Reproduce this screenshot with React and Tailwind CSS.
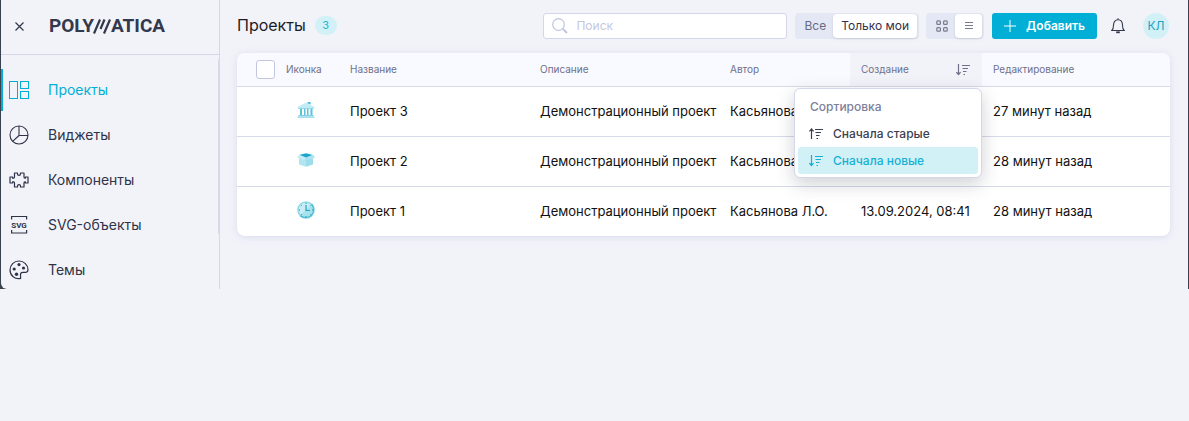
import { useState } from "react";

const NAV = [
  { id: "projects", label: "Проекты", icon: LayoutIcon },
  { id: "widgets", label: "Виджеты", icon: PieIcon },
  { id: "components", label: "Компоненты", icon: PuzzleIcon },
  { id: "svg", label: "SVG-объекты", icon: SvgIcon },
  { id: "themes", label: "Темы", icon: PaletteIcon },
];

const PROJECTS = [
  { id: 3, name: "Проект 3", icon: BankIcon, created: "13.09.2024, 08:42", edited: "27 минут назад" },
  { id: 2, name: "Проект 2", icon: BoxIcon, created: "13.09.2024, 08:41", edited: "28 минут назад" },
  { id: 1, name: "Проект 1", icon: ClockIcon, created: "13.09.2024, 08:41", edited: "28 минут назад" },
];

// Sidebar icons
function LayoutIcon() {
  return (
    <svg width="20" height="20" viewBox="0 0 20 20" fill="none" stroke="currentColor">
      <rect x=".5" y="1.5" width="8" height="17" />
      <rect x="11.5" y="1.5" width="8" height="7" />
      <rect x="11.5" y="11.5" width="8" height="7" />
    </svg>
  );
}

function PieIcon() {
  return (
    <svg width="20" height="20" viewBox="0 0 20 20" fill="none" stroke="currentColor" strokeWidth="1.1">
      <circle cx="10" cy="10" r="9" />
      <path d="M10 1v9.500h9M10 10.500 3.600 16.400" />
    </svg>
  );
}

function PuzzleIcon() {
  return (
    <svg width="20" height="20" viewBox="0 0 20 20" fill="none" stroke="currentColor" strokeWidth="1.2" strokeLinejoin="round">
      <path d="M5.500 7V3h3v1c0 .8.600 1.300 1.500 1.300S11.500 4.800 11.500 4V3h3.500v4c0 1 .5 1.200 1 1.200h.4V7h2.600v6h-2.600v-1.200H16c-.5 0-1 .3-1 1.200v4h-3.500v-1c0-.8-.6-1.300-1.500-1.300S8.500 15.200 8.500 16v1h-3v-4c0-.9-.5-1.200-1-1.200h-.9V13H1V7h2.600v1.200h.9c.5 0 1-.2 1-1.200z" />
    </svg>
  );
}

function SvgIcon() {
  return (
    <svg width="20" height="20" viewBox="0 0 20 20" fill="none" stroke="currentColor" strokeWidth="1.2">
      <path d="M2.600 4.500v-3h15v3M2.600 15v3h15v-3" />
      <text x="10" y="13" textAnchor="middle" stroke="none" fill="currentColor" fontFamily="Roboto, sans-serif" fontWeight="700" fontSize="8">
        SVG
      </text>
    </svg>
  );
}

function PaletteIcon() {
  return (
    <svg width="20" height="20" viewBox="0 0 20 20" fill="none" stroke="currentColor" strokeWidth="1.2">
      <path d="M11.600 18.500C5.800 19.600 1 15.400 1 10c0-5 4-9 9-9s9 4 9 8.600c0 1.800-.6 2.700-2 2.700h-3.200c-1.600 0-2.300 1-2.300 2.300z" />
      <g fill="currentColor" stroke="none">
        <circle cx="10" cy="4.600" r="1.600" />
        <circle cx="5.200" cy="9" r="1.600" />
        <circle cx="14.500" cy="8" r="1.600" />
        <circle cx="7.500" cy="14.200" r="1.700" />
      </g>
    </svg>
  );
}

// Project icons
function BankIcon() {
  return (
    <svg width="18" height="16" viewBox="0 0 18 16" className="mx-auto">
      <path d="M10.500 0h3v2.500l-3-1z" fill="#45bdd8" />
      <path d="M9 .5 17.500 5v1.200H.5V5z" fill="#c2ebf4" />
      <path d="M1.500 6h15v1h-15z" fill="#8bd6e7" />
      <path d="M3 7h2v6H3zM7 7h1.500v6H7zM10 7h1.500v6H10zM13.500 7h2v6h-2z" fill="#5cc2db" />
      <path d="M1.500 13h15v1.200h-15z" fill="#7fd0e3" />
      <path d="M.5 14.200h17V16H.5z" fill="#a3dfec" />
    </svg>
  );
}

function BoxIcon() {
  return (
    <svg width="18" height="14" viewBox="0 0 18 14" className="mx-auto">
      <path d="M2 5h7v8.700L2 11.500z" fill="#b0e5f1" />
      <path d="M16 5H9v8.700l7-2.200z" fill="#9ddcea" />
      <path d="M9 .3 16 2 9 5 2 2z" fill="#1ba7ca" />
      <path d="M2 1.800 9 4.500 7 7 0 4.500z" fill="#c6edf6" />
      <path d="M16 1.800 9 4.500 11 7l7-2.500z" fill="#aee3ef" />
    </svg>
  );
}

function ClockIcon() {
  return (
    <svg width="18" height="18" viewBox="0 0 18 18" className="mx-auto">
      <circle cx="9" cy="9" r="8.800" fill="#8fd9e9" />
      <path d="M2.800 15.200A8.800 8.800 0 0 0 15.200 2.800z" fill="#4fbdd6" />
      <circle cx="8.800" cy="8.800" r="7" fill="#c7eef6" />
      <path d="M3.900 13.800A7 7 0 0 0 13.800 3.900z" fill="#a6e2ee" />
      <path d="M9 4v5.500h4" fill="none" stroke="#2a9fbe" strokeWidth="1.200" />
      <path d="M9 1.800v1M9 15v1M2 9h1M15 9h1M4 4l.7.7M13.500 13.500l.6.6M4 14l.7-.7M13.500 4.500l.6-.6" stroke="#138db0" strokeWidth="1" />
    </svg>
  );
}

// Toolbar icons
function SortIcon({ up }) {
  return (
    <svg width="14" height="12" viewBox="0 0 14 12" fill="none" stroke="currentColor" strokeWidth="1.200" className="shrink-0">
      <path d={up ? "M2.500 11V1M.4 3.400 2.500 1l2.100 2.400" : "M2.500 0v10.400M.4 8.200l2.100 2.300 2.100-2.300"} />
      <path d="M6 1.500h8M6.500 4.500h5.500M7 7.500h3.500M7.500 10.500h1.500" />
    </svg>
  );
}

function Logo() {
  return (
    <a href="#" aria-label="Polymatica" className="flex items-center font-[Roboto,sans-serif] text-[19px] leading-6 font-bold text-[#33384d]">
      <span>POLY</span>
      <svg width="21" height="15" viewBox="0 0 21 15" stroke="currentColor" strokeWidth="2.200" className="-mx-0.5">
        <path d="M2 14.500 8 .5M8.500 10 12.500.5M12 14.500 18 .5" />
      </svg>
      <span>ATICA</span>
    </a>
  );
}

function Sidebar() {
  const [active, setActive] = useState("projects");

  return (
    <aside className="w-[219px] shrink-0 border-r border-[#d6d8e9]">
      <div className="flex h-[55px] items-center border-b border-[#d6d8e9] pb-0.5 pl-3.5">
        <button aria-label="Закрыть меню" className="mr-[25px]">
          <svg width="9" height="9" viewBox="0 0 9 9" stroke="#33384d" strokeWidth="1.200">
            <path d="M.5.5l8 8M8.500.5l-8 8" />
          </svg>
        </button>
        <Logo />
      </div>

      <div className="relative pt-1">
        {/* scrollbar thumb */}
        <div className="absolute top-1 right-0 h-[175px] w-px rounded-full bg-[#d9dbea]" />
        <nav className="flex flex-col gap-[7px] pt-3">
          {NAV.map(({ id, label, icon: Icon }) => (
            <button
              key={id}
              onClick={() => setActive(id)}
              className={`relative flex h-[38px] items-center gap-[19px] pl-2 text-sm ${
                active === id
                  ? "text-[#00aed6] before:absolute before:-inset-y-0.5 before:left-0 before:w-0.5 before:bg-[#00aed6]"
                  : "text-[#2f3347]"
              }`}
            >
              <Icon />
              {label}
            </button>
          ))}
        </nav>
      </div>
    </aside>
  );
}

function Toolbar() {
  const [scope, setScope] = useState("mine");

  return (
    <header className="flex h-[53px] items-center pb-0.5">
      <h1 className="pb-0.5 text-base text-[#1b1d29]">Проекты</h1>
      <span className="ml-[9px] flex h-[19px] w-[22px] items-center justify-center rounded-full bg-[#d2f1f7] text-[11px] text-[#2fb2d3]">
        3
      </span>

      <label className="ml-auto flex h-[26px] w-[244px] items-center gap-2 rounded-[3px] border border-[#d3d7e9] bg-white px-2">
        <svg width="16" height="16" viewBox="0 0 16 16" fill="none" stroke="#c0c5de" className="shrink-0">
          <circle cx="6.500" cy="6.500" r="5.800" strokeWidth="1.200" />
          <path d="m11 11 4 4" strokeWidth="1.800" />
        </svg>
        <input
          type="search"
          aria-label="Поиск"
          placeholder="Поиск"
          className="min-w-0 flex-1 text-xs outline-none placeholder:text-[#c3c7df]"
        />
      </label>

      <div className="ml-2 flex h-[26px] items-center rounded bg-[#e4e8f4] p-0.5 text-xs">
        <button onClick={() => setScope("all")} className="h-[22px] px-[7px] text-[#686b84]">
          Все
        </button>
        <button
          onClick={() => setScope("mine")}
          aria-pressed={scope === "mine"}
          className="h-6 rounded bg-white px-2 text-[#35304a] shadow-sm"
        >
          Только мои
        </button>
      </div>

      <div className="ml-[7px] flex h-[26px] items-center rounded bg-[#e4e8f4] p-0.5 text-[#77798c]">
        <button aria-label="Плитка" className="flex h-[22px] w-[27px] items-center justify-center">
          <svg width="12" height="12" viewBox="0 0 12 12" fill="none" stroke="currentColor" strokeWidth="1.200">
            <rect x=".8" y=".8" width="3.600" height="3.600" rx="1" />
            <rect x="7.600" y=".8" width="3.600" height="3.600" rx="1" />
            <rect x=".8" y="7.600" width="3.600" height="3.600" rx="1" />
            <rect x="7.600" y="7.600" width="3.600" height="3.600" rx="1" />
          </svg>
        </button>
        <button aria-label="Список" className="flex h-6 w-[27px] items-center justify-center rounded bg-white shadow-sm">
          <svg width="8" height="8" viewBox="0 0 8 8" stroke="currentColor">
            <path d="M0 .5h8M0 3.500h8M0 6.500h8" />
          </svg>
        </button>
      </div>

      <button className="ml-2 flex h-[26px] items-center gap-2.5 rounded-[3px] bg-[#00aed6] px-3 text-xs font-semibold text-white">
        <svg width="12" height="12" viewBox="0 0 12 12" stroke="currentColor">
          <path d="M6 0v12M0 6h12" />
        </svg>
        Добавить
      </button>

      <button aria-label="Уведомления" className="ml-[14px] text-[#33384d]">
        <svg width="14" height="16" viewBox="0 0 14 16" fill="none" stroke="currentColor" strokeWidth="1.100">
          <path d="M.8 12.500c1.500-1.200 1.700-2.500 1.700-5.200C2.500 4 4.200 1.800 7 1.800S11.500 4 11.500 7.300c0 2.700.2 4 1.700 5.200zM7 .3v1.500" />
          <path d="M5.200 14.300h3.600" strokeWidth="1.800" />
        </svg>
      </button>

      <button className="mr-px ml-[18px] flex size-[26px] items-center justify-center rounded-full bg-[#d2f1f7] text-xs text-[#1fa3c2]">
        КЛ
      </button>
    </header>
  );
}

function SortMenu({ value, onChange }) {
  const options = [
    { id: "old", label: "Сначала старые", up: true },
    { id: "new", label: "Сначала новые", up: false },
  ];

  return (
    <div className="absolute top-full right-0 z-10 mt-0.5 w-[188px] rounded-md border border-[#d3d7e9] bg-white p-[3px] pt-1 text-xs font-medium shadow-[0_6px_18px_rgba(40,45,70,0.22)]">
      <p className="flex h-[27px] items-center px-3 text-[#7c809b]">Сортировка</p>
      {options.map((o) => (
        <button
          key={o.id}
          onClick={() => onChange(o.id)}
          className={`flex h-[27px] w-full items-center gap-2.5 rounded-[3px] px-[11px] ${
            value === o.id ? "bg-[#d2f1f7] text-[#16b0d4]" : "text-[#3c3f50]"
          }`}
        >
          <SortIcon up={o.up} />
          {o.label}
        </button>
      ))}
    </div>
  );
}

function ProjectsTable() {
  const [sort, setSort] = useState("new");

  return (
    <table className="w-full table-fixed border-separate border-spacing-0 rounded-lg bg-white text-left text-[13px] text-[#111] shadow-[0_1px_6px_rgba(190,196,225,0.5)]">
      <thead className="text-[10px] text-[#6e708a]">
        <tr className="h-[34px] *:border-b *:border-[#d6dae9] *:bg-[#f9faff] *:p-0 *:font-normal">
          <th className="w-[38px] rounded-tl-lg">
            <input
              type="checkbox"
              aria-label="Выбрать все"
              className="ml-auto block size-[19px] appearance-none rounded-[3px] border border-[#c3c6e2] bg-white checked:bg-[#00aed6]"
            />
          </th>
          <th className="w-[64px]"><span className="pl-[11px]">Иконка</span></th>
          <th className="w-[190px]"><span className="pl-[11px]">Название</span></th>
          <th className="w-[190px]"><span className="pl-[11px]">Описание</span></th>
          <th className="w-[131px]"><span className="pl-[11px]">Автор</span></th>
          <th className="relative w-[132px] bg-[#f2f3f9]!">
            <button className="flex w-full items-center justify-between pr-3 pl-[11px]">
              Создание
              <SortIcon />
            </button>
            <SortMenu value={sort} onChange={setSort} />
          </th>
          <th className="w-[188px] rounded-tr-lg"><span className="pl-[11px]">Редактирование</span></th>
        </tr>
      </thead>
      <tbody>
        {PROJECTS.map(({ id, name, icon: Icon, created, edited }) => (
          <tr key={id} className="h-[50px] *:border-b *:border-[#d6dae9] *:p-0 *:pl-[11px] *:whitespace-nowrap last:h-[49px] last:*:border-0">
            <td />
            <td className="pr-0.5! pb-[3px]! pl-0!"><Icon /></td>
            <td>{name}</td>
            <td>Демонстрационный проект</td>
            <td>Касьянова Л.О.</td>
            <td>{created}</td>
            <td>{edited}</td>
          </tr>
        ))}
      </tbody>
    </table>
  );
}

export default function App() {
  return (
    <div className="min-h-screen bg-[#f2f3f9] font-[Inter,sans-serif]">
      <div className="bg-[#3a424f] px-px">
        <div className="flex rounded-bl-md bg-[#f2f3f9]">
          <Sidebar />
          <main className="min-w-0 flex-1 pr-[18px] pl-[17px]">
            <Toolbar />
            <ProjectsTable />
          </main>
        </div>
      </div>
    </div>
  );
}
